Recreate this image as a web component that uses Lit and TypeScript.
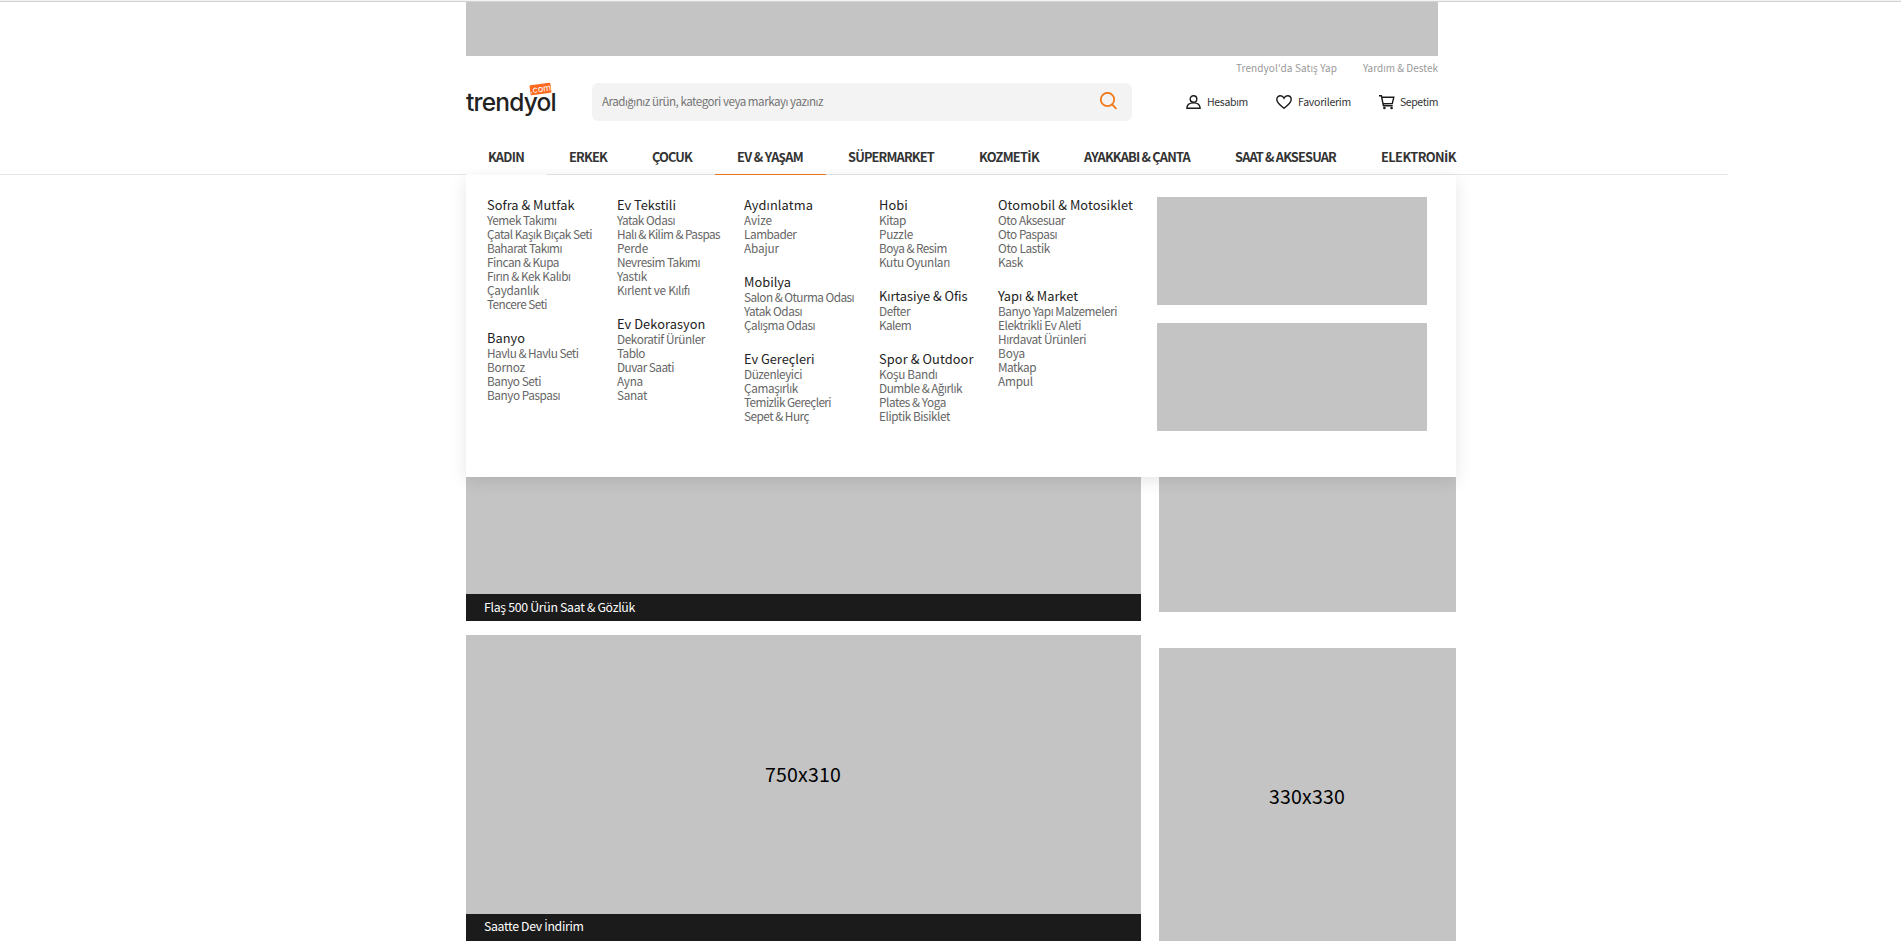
import { LitElement, html, css, svg } from "lit";
import { customElement } from "lit/decorators.js";

type Entry = [string, number];
type Group = { title: Entry; items: Entry[] };

const columns: { width: number; groups: Group[] }[] = [
  { width: 130, groups: [
    { title: ["Sofra & Mutfak", 87.5], items: [["Yemek Takımı", 69.5], ["Çatal Kaşık Bıçak Seti", 105], ["Baharat Takımı", 75], ["Fincan & Kupa", 72], ["Fırın & Kek Kalıbı", 83.5], ["Çaydanlık", 52], ["Tencere Seti", 60]] },
    { title: ["Banyo", 38], items: [["Havlu & Havlu Seti", 91.5], ["Bornoz", 38], ["Banyo Seti", 54], ["Banyo Paspası", 73]] } ] },
  { width: 127, groups: [
    { title: ["Ev Tekstili", 59], items: [["Yatak Odası", 58], ["Halı & Kilim & Paspas", 103], ["Perde", 31], ["Nevresim Takımı", 83], ["Yastık", 30], ["Kırlent ve Kılıfı", 73]] },
    { title: ["Ev Dekorasyon", 88.5], items: [["Dekoratif Ürünler", 88], ["Tablo", 28], ["Duvar Saati", 57], ["Ayna", 26], ["Sanat", 30]] } ] },
  { width: 135, groups: [
    { title: ["Aydınlatma", 69], items: [["Avize", 28], ["Lambader", 52.5], ["Abajur", 35]] },
    { title: ["Mobilya", 47], items: [["Salon & Oturma Odası", 110], ["Yatak Odası", 58], ["Çalışma Odası", 71]] },
    { title: ["Ev Gereçleri", 70.5], items: [["Düzenleyici", 58], ["Çamaşırlık", 54], ["Temizlik Gereçleri", 87], ["Sepet & Hurç", 65]] } ] },
  { width: 119, groups: [
    { title: ["Hobi", 29], items: [["Kitap", 27], ["Puzzle", 34], ["Boya & Resim", 68], ["Kutu Oyunları", 71]] },
    { title: ["Kırtasiye & Ofis", 88.5], items: [["Defter", 31], ["Kalem", 32]] },
    { title: ["Spor & Outdoor", 94.5], items: [["Koşu Bandı", 58.5], ["Dumble & Ağırlık", 83], ["Plates & Yoga", 67], ["Eliptik Bisiklet", 71]] } ] },
  { width: 159, groups: [
    { title: ["Otomobil & Motosiklet", 135], items: [["Oto Aksesuar", 67], ["Oto Paspası", 59], ["Oto Lastik", 52], ["Kask", 25]] },
    { title: ["Yapı & Market", 80], items: [["Banyo Yapı Malzemeleri", 119], ["Elektrikli Ev Aleti", 83], ["Hırdavat Ürünleri", 88], ["Boya", 27], ["Matkap", 38], ["Ampul", 35]] } ] },
];

const nav: Entry[] = [["KADIN", 36], ["ERKEK", 38], ["ÇOCUK", 40], ["EV & YAŞAM", 66], ["SÜPERMARKET", 86], ["KOZMETİK", 60], ["AYAKKABI & ÇANTA", 106], ["SAAT & AKSESUAR", 101], ["ELEKTRONİK", 75]];

/** A single line of text, tracked so that it fills a given measure. */
@customElement("tracked-text")
class TrackedText extends LitElement {
  static properties = { text: {}, measure: { type: Number } };
  declare text: string;
  declare measure: number;
  static styles = css`
    :host { display: block; white-space: pre; }
    .run { display: inline-block; }
    .dotted { font-family: "Open Sans", sans-serif; font-size: 1.02em; line-height: 1; }
  `;
  render() {
    return html`<span class="run">${this.text.split(/(İ)/).map((t) => (t === "İ" ? html`<span class="dotted">İ</span>` : t))}</span>`;
  }
  updated() {
    const run = this.renderRoot.querySelector(".run") as HTMLElement;
    run.style.letterSpacing = "0";
    const natural = run.getBoundingClientRect().width;
    run.style.letterSpacing = `${(this.measure - natural) / this.text.length}px`;
    this.style.width = `${this.measure}px`;
  }
}

const tracked = ([text, measure]: Entry) => html`<tracked-text .text=${text} .measure=${measure}></tracked-text>`;

const userIcon = svg`<circle cx="7.5" cy="4" r="3.3"/><path d="M.9 13.3C.9 9.8 3.2 7.9 7.5 7.9s6.6 1.9 6.6 5.4z"/>`;
const heartIcon = svg`<path d="M8 13.3C3.5 10 .8 7.6.8 4.6.8 2.3 2.500.8 4.400.8 6 .8 7.300 1.700 8 3.200 8.700 1.700 10 .8 11.600.8c1.900 0 3.600 1.500 3.600 3.800 0 3-2.700 5.400-7.200 8.700z"/>`;
const cartIcon = svg`<path d="M0 .8h2.400l2 9.900h9.300M2.800 2.300h12l-1.500 6.200-9.200.2"/><circle cx="5.400" cy="13" r=".6"/><circle cx="12.600" cy="13" r=".6"/>`;

@customElement("app-root")
class AppRoot extends LitElement {
  static styles = css`
    :host { display: block; height: 941px; overflow: hidden; background: #fff; color: #333;
      font-family: "Noto Sans CJK SC", "Open Sans", sans-serif; border-top: 1px solid #f3f3f3; box-sizing: border-box; }
    * { box-sizing: border-box; }
    .topline { height: 1px; background: #d2d2d2; }
    .wrap { width: 990px; margin-left: 466px; }
    .banner { width: 972px; height: 54px; background: #c4c4c4; }
    .links { width: 972px; height: 24px; display: flex; justify-content: flex-end; gap: 26px; font-size: 10px; line-height: 23px; color: #999; }
    .bar { width: 972px; height: 44px; display: flex; align-items: flex-start; padding-top: 3px; }
    .logo { position: relative; width: 126px; height: 38px; font: 500 24.5px/38px Inter, sans-serif; color: #222; }
    .com { position: absolute; left: 64px; top: 1px; width: 21px; height: 10px; border-radius: 1px; background: #ff6a1f; color: #fff;
      font: 400 9px/9px Inter, sans-serif; transform: rotate(-8deg); text-align: center; }
    .search { width: 540px; height: 38px; background: #f3f3f3; border-radius: 6px; display: flex; justify-content: space-between;
      padding: 0 15px 0 10px; color: #757575; font-size: 11.6px; line-height: 37px; }
    .search svg { margin-top: 9px; }
    .tools { flex: 1; display: flex; justify-content: flex-end; font-size: 10.5px; line-height: 38px; }
    .tool { display: flex; }
    .tool svg { margin: 12px 6px 0 0; fill: none; stroke: #1a1a1a; stroke-width: 1.4; overflow: visible; }
    .tool + .tool { margin-left: 28px; }
    .nav { display: flex; flex: none; width: 990px; height: 51px; white-space: nowrap; font-size: 12.8px; font-weight: 700; line-height: 20px; }
    .tab { padding: 23px 23px 0 22px; height: 51px; border-bottom: 1px solid #e6e6e6; }
    .tab:first-child { border-color: #fff; }
    .tab.on { border-color: #f27a1a; }
    .tab:last-child { padding-right: 0; flex: 1; }
    .strip { display: flex; height: 51px; }
    .side { width: 466px; border-bottom: 1px solid #e6e6e6; }
    .side.right { width: 272px; }
    .menu { position: relative; z-index: 1; width: 990px; height: 302px; margin-left: 466px; background: #fff; padding: 21px 0 0 21px;
      display: flex; box-shadow: 0 4px 16px rgba(0,0,0,.1); clip-path: inset(-6px -30px -30px -30px); }
    .title { height: 17px; font-size: 12.8px; line-height: 17px; color: #222; margin-top: 18px; }
    .group:first-child .title { margin-top: 0; }
    .item { height: 14px; font-size: 11.8px; line-height: 14px; color: #666; }
    .promos { padding-top: 1px; display: flex; flex-direction: column; gap: 18px; }
    .promo { width: 270px; height: 108px; background: #c4c4c4; }
    .content { display: flex; gap: 18px; }
    .main { width: 675px; }
    .ph { background: #c4c4c4; display: flex; justify-content: center; align-items: center; color: #000; font-size: 19.5px; line-height: 26px; }
    .ph tracked-text { margin: 0 1px 2px 0; }
    .caption { height: 27px; background: #1b1b1b; color: #fff; font-size: 12.3px; line-height: 27px; padding-left: 18px; }
    .caption.low { line-height: 25px; }
    .aside { width: 297px; }
  `;

  render() {
    return html`
      <div class="topline"></div>
      <div class="wrap">
        <div class="banner"></div>
        <div class="links">${tracked(["Trendyol'da Satış Yap", 101])}${tracked(["Yardım & Destek", 75])}</div>
        <div class="bar">
          <div class="logo">${tracked(["trendyol", 90])}<div class="com">.com</div></div>
          <div class="search">${tracked(["Aradığınız ürün, kategori veya markayı yazınız", 221])}
            <svg width="17" height="18" viewBox="0 0 17 18" fill="none" stroke="#f27a1a" stroke-width="1.8"><circle cx="7.5" cy="7.5" r="6.7"/><path d="M12.2 12.5l4.2 4.3"/></svg></div>
          <div class="tools">
            <div class="tool"><svg width="15" height="14">${userIcon}</svg>${tracked(["Hesabım", 41])}</div>
            <div class="tool"><svg width="16" height="14">${heartIcon}</svg>${tracked(["Favorilerim", 53])}</div>
            <div class="tool"><svg width="15" height="14">${cartIcon}</svg>${tracked(["Sepetim", 38])}</div>
          </div>
        </div>
      </div>
      <div class="strip">
        <div class="side"></div>
        <nav class="nav">${nav.map((n) => html`<div class="tab ${n[0] === "EV & YAŞAM" ? "on" : ""}">${tracked(n)}</div>`)}</nav>
        <div class="side right"></div>
      </div>
      <div class="menu">
        ${columns.map((c) => html`<div style="width:${c.width}px">${c.groups.map((g) => html`<div class="group">
          <div class="title">${tracked(g.title)}</div>${g.items.map((i) => html`<div class="item">${tracked(i)}</div>`)}</div>`)}</div>`)}
        <div class="promos"><div class="promo"></div><div class="promo"></div></div>
      </div>
      <div class="wrap content">
        <div class="main">
          <div class="ph" style="height:117px"></div>
          <div class="caption">${tracked(["Flaş 500 Ürün Saat & Gözlük", 151])}</div>
          <div class="ph" style="height:279px;margin-top:14px">${tracked(["750x310", 76])}</div>
          <div class="caption low">${tracked(["Saatte Dev İndirim", 99.5])}</div>
        </div>
        <div class="aside">
          <div class="ph" style="height:135px"></div>
          <div class="ph" style="height:297px;margin-top:36px">${tracked(["330x330", 76])}</div>
        </div>
      </div>`;
  }
}
